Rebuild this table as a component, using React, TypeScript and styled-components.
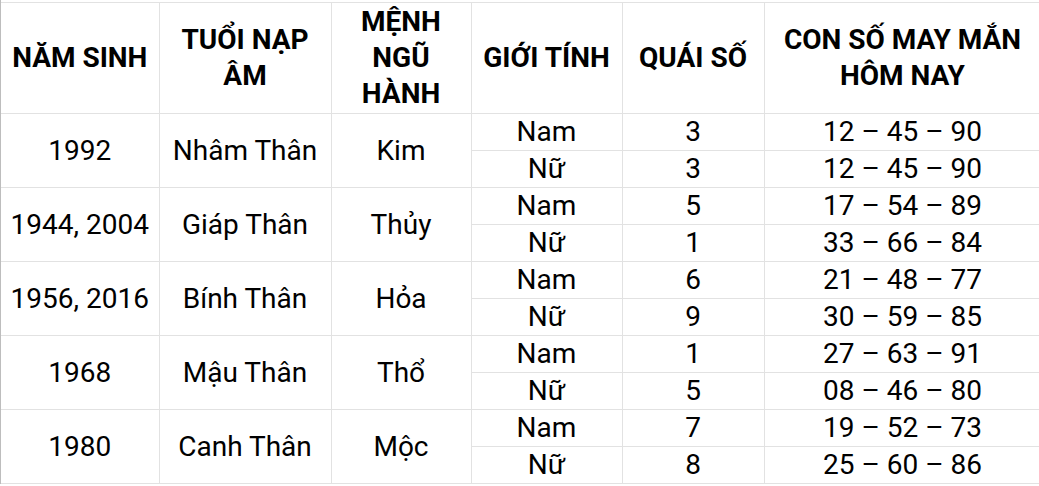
import styled, { createGlobalStyle } from "styled-components";

const GlobalStyle = createGlobalStyle`
  html, body {
    margin: 0;
    padding: 0;
    background: #ffffff;
    overflow: hidden;
  }
`;

type Row = {
  year: string;
  napAm: string;
  menh: string;
  nam: [string, string];
  nu: [string, string];
};

const rows: Row[] = [
  { year: "1992", napAm: "Nhâm Thân", menh: "Kim", nam: ["3", "12 – 45 – 90"], nu: ["3", "12 – 45 – 90"] },
  { year: "1944, 2004", napAm: "Giáp Thân", menh: "Thủy", nam: ["5", "17 – 54 – 89"], nu: ["1", "33 – 66 – 84"] },
  { year: "1956, 2016", napAm: "Bính Thân", menh: "Hỏa", nam: ["6", "21 – 48 – 77"], nu: ["9", "30 – 59 – 85"] },
  { year: "1968", napAm: "Mậu Thân", menh: "Thổ", nam: ["1", "27 – 63 – 91"], nu: ["5", "08 – 46 – 80"] },
  { year: "1980", napAm: "Canh Thân", menh: "Mộc", nam: ["7", "19 – 52 – 73"], nu: ["8", "25 – 60 – 86"] },
];

const colWidths = [158, 172, 140, 151, 142, 277];

export default function App() {
  return (
    <>
      <GlobalStyle />
      <Sheet>
        <Table>
          <colgroup>
            {colWidths.map((w, i) => (
              <col key={i} style={{ width: w }} />
            ))}
          </colgroup>
          <thead>
            <tr>
              <HeadCell $first>NĂM SINH</HeadCell>
              <HeadCell>TUỔI NẠP ÂM</HeadCell>
              <HeadCell>MỆNH NGŨ HÀNH</HeadCell>
              <HeadCell>GIỚI TÍNH</HeadCell>
              <HeadCell>QUÁI SỐ</HeadCell>
              <HeadCell>CON SỐ MAY MẮN HÔM NAY</HeadCell>
            </tr>
          </thead>
          <tbody>
            {rows.map((r) => [
              <tr key={r.year + "a"}>
                <Cell rowSpan={2} $first>{r.year}</Cell>
                <Cell rowSpan={2}>{r.napAm}</Cell>
                <Cell rowSpan={2}>{r.menh}</Cell>
                <Cell>Nam</Cell>
                <Cell>{r.nam[0]}</Cell>
                <Cell>{r.nam[1]}</Cell>
              </tr>,
              <tr key={r.year + "b"}>
                <Cell>Nữ</Cell>
                <Cell>{r.nu[0]}</Cell>
                <Cell>{r.nu[1]}</Cell>
              </tr>,
            ])}
          </tbody>
        </Table>
      </Sheet>
    </>
  );
}

const Sheet = styled.div`
  padding-top: 2px;
  border-left: 1px solid #bdbdbd;
  width: 1041px;
  box-sizing: border-box;
`;

const Table = styled.table`
  border-collapse: collapse;
  table-layout: fixed;
  width: 1040px;
  font-family: Roboto, "Liberation Sans", sans-serif;
  color: #000000;
`;

const HeadCell = styled.th<{ $first?: boolean }>`
  height: 110px;
  padding: 0 6px;
  border: 1px solid #e2e2e2;
  border-left: ${(p) => (p.$first ? "none" : "1px solid #e2e2e2")};
  font-size: 28px;
  font-weight: 700;
  line-height: 36px;
  text-align: center;
  vertical-align: middle;
`;

const Cell = styled.td<{ $first?: boolean }>`
  height: 36px;
  padding: 0 4px;
  border: 1px solid #e2e2e2;
  border-left: ${(p) => (p.$first ? "none" : "1px solid #e2e2e2")};
  font-size: 28px;
  font-weight: 400;
  line-height: 36px;
  text-align: center;
  vertical-align: middle;
  white-space: nowrap;
`;
